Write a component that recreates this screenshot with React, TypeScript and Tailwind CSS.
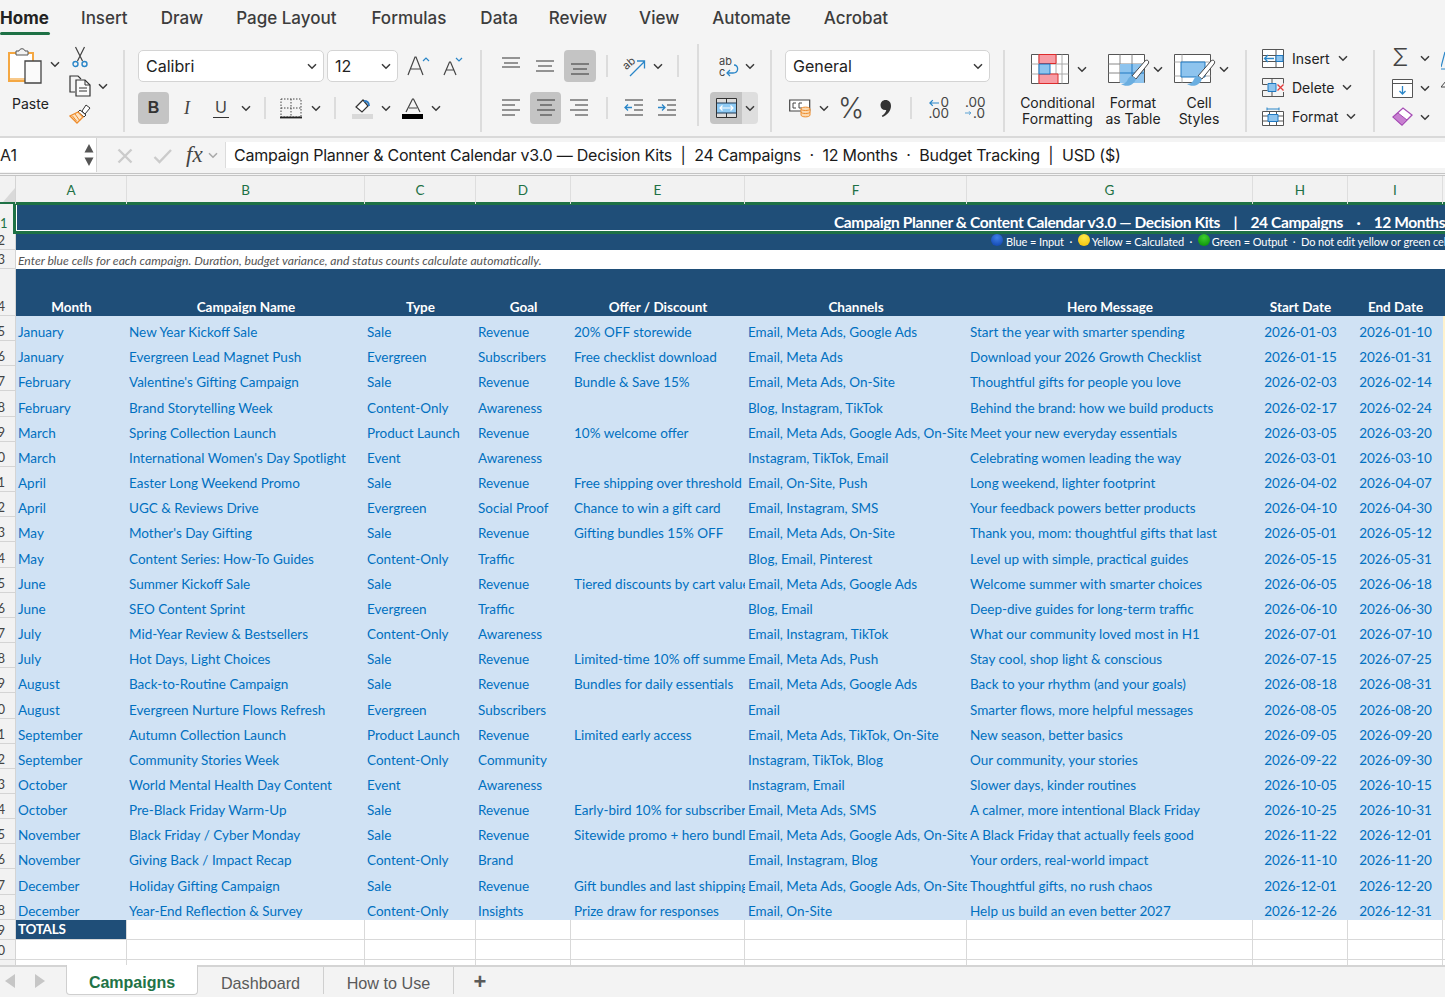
import React from "react";

const rows: string[][] = [
["January","New Year Kickoff Sale","Sale","Revenue","20% OFF storewide","Email, Meta Ads, Google Ads","Start the year with smarter spending","2026-01-03","2026-01-10"],
["January","Evergreen Lead Magnet Push","Evergreen","Subscribers","Free checklist download","Email, Meta Ads","Download your 2026 Growth Checklist","2026-01-15","2026-01-31"],
["February","Valentine's Gifting Campaign","Sale","Revenue","Bundle & Save 15%","Email, Meta Ads, On-Site","Thoughtful gifts for people you love","2026-02-03","2026-02-14"],
["February","Brand Storytelling Week","Content-Only","Awareness","","Blog, Instagram, TikTok","Behind the brand: how we build products","2026-02-17","2026-02-24"],
["March","Spring Collection Launch","Product Launch","Revenue","10% welcome offer","Email, Meta Ads, Google Ads, On-Site","Meet your new everyday essentials","2026-03-05","2026-03-20"],
["March","International Women's Day Spotlight","Event","Awareness","","Instagram, TikTok, Email","Celebrating women leading the way","2026-03-01","2026-03-10"],
["April","Easter Long Weekend Promo","Sale","Revenue","Free shipping over threshold","Email, On-Site, Push","Long weekend, lighter footprint","2026-04-02","2026-04-07"],
["April","UGC & Reviews Drive","Evergreen","Social Proof","Chance to win a gift card","Email, Instagram, SMS","Your feedback powers better products","2026-04-10","2026-04-30"],
["May","Mother's Day Gifting","Sale","Revenue","Gifting bundles 15% OFF","Email, Meta Ads, On-Site","Thank you, mom: thoughtful gifts that last","2026-05-01","2026-05-12"],
["May","Content Series: How-To Guides","Content-Only","Traffic","","Blog, Email, Pinterest","Level up with simple, practical guides","2026-05-15","2026-05-31"],
["June","Summer Kickoff Sale","Sale","Revenue","Tiered discounts by cart value","Email, Meta Ads, Google Ads","Welcome summer with smarter choices","2026-06-05","2026-06-18"],
["June","SEO Content Sprint","Evergreen","Traffic","","Blog, Email","Deep-dive guides for long-term traffic","2026-06-10","2026-06-30"],
["July","Mid-Year Review & Bestsellers","Content-Only","Awareness","","Email, Instagram, TikTok","What our community loved most in H1","2026-07-01","2026-07-10"],
["July","Hot Days, Light Choices","Sale","Revenue","Limited-time 10% off summer edit","Email, Meta Ads, Push","Stay cool, shop light & conscious","2026-07-15","2026-07-25"],
["August","Back-to-Routine Campaign","Sale","Revenue","Bundles for daily essentials","Email, Meta Ads, Google Ads","Back to your rhythm (and your goals)","2026-08-18","2026-08-31"],
["August","Evergreen Nurture Flows Refresh","Evergreen","Subscribers","","Email","Smarter flows, more helpful messages","2026-08-05","2026-08-20"],
["September","Autumn Collection Launch","Product Launch","Revenue","Limited early access","Email, Meta Ads, TikTok, On-Site","New season, better basics","2026-09-05","2026-09-20"],
["September","Community Stories Week","Content-Only","Community","","Instagram, TikTok, Blog","Our community, your stories","2026-09-22","2026-09-30"],
["October","World Mental Health Day Content","Event","Awareness","","Instagram, Email","Slower days, kinder routines","2026-10-05","2026-10-15"],
["October","Pre-Black Friday Warm-Up","Sale","Revenue","Early-bird 10% for subscribers","Email, Meta Ads, SMS","A calmer, more intentional Black Friday","2026-10-25","2026-10-31"],
["November","Black Friday / Cyber Monday","Sale","Revenue","Sitewide promo + hero bundles","Email, Meta Ads, Google Ads, On-Site","A Black Friday that actually feels good","2026-11-22","2026-12-01"],
["November","Giving Back / Impact Recap","Content-Only","Brand","","Email, Instagram, Blog","Your orders, real-world impact","2026-11-10","2026-11-20"],
["December","Holiday Gifting Campaign","Sale","Revenue","Gift bundles and last shipping dates","Email, Meta Ads, Google Ads, On-Site","Thoughtful gifts, no rush chaos","2026-12-01","2026-12-20"],
["December","Year-End Reflection & Survey","Content-Only","Insights","Prize draw for responses","Email, On-Site","Help us build an even better 2027","2026-12-26","2026-12-31"],
];

const cols = "grid grid-cols-[16px_111px_238px_111px_95px_174px_222px_286px_95px_95px_200px]";

const Chev = ({ c = "" }: { c?: string }) => (
  <svg width="10" height="7" viewBox="0 0 10 7" className={"shrink-0 " + c}><path d="M1 1.200 5 5.200 9 1.200" fill="none" stroke="#3a3a3a" strokeWidth="1.500" /></svg>
);
const Sep = ({ c = "" }: { c?: string }) => <div className={"w-[2px] shrink-0 bg-[#dcdcdc] " + c} />;

const Lines = ({ ws }: { ws: number[][] }) => (
  <svg width="20" height="20" viewBox="0 0 20 20" className="block">
    {ws.map(([x1, x2, y], i) => <path key={i} d={`M${x1} ${y}H${x2}`} stroke="#333" strokeWidth="1" fill="none" />)}
  </svg>
);

function Paste() {
  return (
    <svg width="38" height="42" viewBox="0 0 38 42" className="shrink-0">
      <path d="M2 8h24v28H2z" fill="#fff" stroke="#f4a742" strokeWidth="2" />
      <path d="M3 34h22" stroke="#f8c98a" strokeWidth="2" />
      <path d="M9 10V6h3c.5-3 5.500-3 6 0h3v4z" fill="#f3f3f3" stroke="#555" strokeWidth="1" />
      <path d="M18 16h16v22H18z" fill="#fafafa" stroke="#444" strokeWidth="1.300" />
    </svg>
  );
}
function Cut() {
  return (
    <svg width="16" height="22" viewBox="0 0 16 22" className="shrink-0">
      <path d="M3.500 1 10.500 15M12.500 1 5.500 15" stroke="#444" strokeWidth="1.200" fill="none" />
      <circle cx="3.500" cy="18" r="2.500" fill="none" stroke="#2a86c8" strokeWidth="1.400" />
      <circle cx="12.500" cy="18" r="2.500" fill="none" stroke="#2a86c8" strokeWidth="1.400" />
    </svg>
  );
}
function CopyI() {
  return (
    <svg width="22" height="22" viewBox="0 0 22 22" className="shrink-0">
      <path d="M6 17H1V1h8l3 3" fill="none" stroke="#333" strokeWidth="1.200" />
      <path d="M7 5h9l5 5v11H7z" fill="#fafafa" stroke="#333" strokeWidth="1.200" />
      <path d="M16 5v5h5M10 13h8M10 16h8" fill="none" stroke="#333" />
    </svg>
  );
}
function Painter() {
  return (
    <svg width="22" height="20" viewBox="0 0 22 20" className="shrink-0">
      <path d="M17 1l4 3-5 6-3-3z" fill="#fff" stroke="#333" />
      <path d="M11 6l6 5-2 2-6-5z" fill="#fff" stroke="#333" />
      <path d="M9 8 1 12l7 7 6-6z" fill="#fde3c3" stroke="#ee8c2c" strokeWidth="1.300" />
      <path d="M6 10l5 7M3.500 12l4 5" stroke="#ee8c2c" fill="none" />
    </svg>
  );
}
function BigA({ big }: { big?: boolean }) {
  return (
    <svg width="24" height="22" viewBox="0 0 24 22" className="shrink-0">
      {big ? <>
        <path d="M1 20 8 2h1l7 18M4 14h10" fill="none" stroke="#444" strokeWidth="1.200" />
        <path d="M16 6l3-3 3 3" fill="none" stroke="#2a86c8" strokeWidth="1.200" />
      </> : <>
        <path d="M1 20 6.500 7h1L13 20M3 15h8" fill="none" stroke="#444" strokeWidth="1.200" />
        <path d="M13 3l3 3 3-3" fill="none" stroke="#2a86c8" strokeWidth="1.200" />
      </>}
    </svg>
  );
}
function Borders() {
  return (
    <svg width="22" height="21" viewBox="0 0 22 21" className="shrink-0">
      <path d="M1 1h20v18H1zM11 1v18M1 10h20" fill="none" stroke="#444" strokeDasharray="1.500 1.500" />
      <path d="M0 19.500h22" stroke="#222" strokeWidth="1.800" />
    </svg>
  );
}
function FillI() {
  return (
    <svg width="22" height="22" viewBox="0 0 22 22" className="shrink-0">
      <path d="M4 10l7-7 5 6-6 6z" fill="#fff" stroke="#333" strokeWidth="1.200" />
      <path d="M12 4c3 0 5 2 5 5" fill="none" stroke="#2a78c0" strokeWidth="1.800" />
      <path d="M0 17h21v5H0z" fill="#d9d9d9" />
    </svg>
  );
}
function FontA() {
  return (
    <svg width="22" height="21" viewBox="0 0 22 21" className="shrink-0">
      <path d="M4 14 10.500 1h1L18 14M7 10h8" fill="none" stroke="#444" strokeWidth="1.200" />
      <path d="M0 16h21v5H0z" fill="#000" />
    </svg>
  );
}
function Orient() {
  return (
    <svg width="24" height="24" viewBox="0 0 24 24" className="shrink-0">
      <text x="0" y="13" fontSize="11" fill="#444" fontFamily="Inter" transform="rotate(-40 6 10)">ab</text>
      <path d="M7 22 21 8M14 7h7.500v7.500" fill="none" stroke="#2a86c8" strokeWidth="1.300" />
    </svg>
  );
}
function WrapI() {
  return (
    <svg width="22" height="22" viewBox="0 0 22 22" className="shrink-0">
      <text x="1" y="10" fontSize="11" fill="#444" fontFamily="Inter">ab</text>
      <text x="1" y="21" fontSize="11" fill="#444" fontFamily="Inter">c</text>
      <path d="M9 18h6c6 0 6-8 1-8" fill="none" stroke="#2a86c8" strokeWidth="1.300" />
      <path d="M12 15l-3 3 3 3" fill="none" stroke="#2a86c8" strokeWidth="1.300" />
    </svg>
  );
}
function Merge() {
  return (
    <svg width="21" height="20" viewBox="0 0 21 20" className="shrink-0">
      <path d="M.5.500h20v19H.500z" fill="#dcdcdc" stroke="#333" />
      <path d="M10.500 .5v5M10.500 14.500v5" stroke="#333" fill="none" />
      <path d="M1 5h19v10H1z" fill="#8fcbf5" />
      <path d="M.5 5h20M.5 15h20" stroke="#1f3a57" strokeWidth="1.200" fill="none" />
      <path d="M4 10h13M6.500 7.500 4 10l2.500 2.500M14.500 7.500 17 10l-2.500 2.500" stroke="#fff" strokeWidth="1.200" fill="none" />
    </svg>
  );
}
function Currency() {
  return (
    <svg width="22" height="20" viewBox="0 0 22 20" className="shrink-0">
      <path d="M.7 2h20v11H.700z" fill="#fff" stroke="#444" strokeWidth="1.200" />
      <path d="M4 5h3M4 10h3M4 5v5M10 5h3M10 10h3M10 5v5" stroke="#444" fill="none" />
      <path d="M12 11c0-2.500 9-2.500 9 0v6c0 2.500-9 2.500-9 0z" fill="#fbd9b0" stroke="#ee8c2c" />
      <path d="M12 11c0 2 9 2 9 0M12 14c0 2 9 2 9 0" fill="none" stroke="#ee8c2c" />
    </svg>
  );
}
function Dec({ inc }: { inc?: boolean }) {
  return inc ? (
    <div className="w-[20px] h-[22px] shrink-0 text-[13.500px] leading-[10.500px] text-[#444] font-['Inter']">
      <div className="text-right">.00</div>
      <div className="flex items-center justify-end gap-[1px] h-[11px]"><svg width="12" height="10" viewBox="0 0 12 10"><path d="M0 5h10M7 2l3 3-3 3" fill="none" stroke="#2a86c8" strokeWidth="1.300" /></svg><span>.0</span></div>
    </div>
  ) : (
    <div className="w-[21px] h-[22px] shrink-0 text-[13.500px] leading-[10.500px] text-[#444] font-['Inter']">
      <div className="flex items-center justify-end gap-[1px] h-[11px]"><svg width="12" height="10" viewBox="0 0 12 10"><path d="M12 5H2M5 2 2 5l3 3" fill="none" stroke="#2a86c8" strokeWidth="1.300" /></svg><span>0</span></div>
      <div className="text-right">.00</div>
    </div>
  );
}
function Cf() {
  return (
    <svg width="38" height="30" viewBox="0 0 38 30" className="shrink-0">
      <path d="M.5.500h37v29H.500z" fill="#fff" stroke="#555" />
      <path d="M.5 10h37M.5 20h37M8 .5v29M25 .5v29M31 .5v29" stroke="#aaa" fill="none" />
      <path d="M8 .5h17v9H8z" fill="#f79ca4" stroke="#dd2b2b" />
      <path d="M8 20h19v9.500H8z" fill="#f79ca4" stroke="#dd2b2b" />
      <path d="M8 10h11v10H8z" fill="#8ec4ee" stroke="#1f78c1" />
    </svg>
  );
}
function Brush({ fancy }: { fancy?: boolean }) {
  return (
    <svg width="42" height="36" viewBox="0 0 42 36" className="shrink-0 mt-[6px]">
      <path d="M.5.500h36v28H.500z" fill="#fff" stroke="#555" />
      {fancy ? <>
        <path d="M.5 8h36M8 .5v28M.5 22h36" stroke="#aaa" fill="none" />
        <path d="M7 8h24v15H7z" fill="#8ec4ee" stroke="#1f78c1" />
      </> : <>
        <path d="M.5 10h36M.5 19h36M12 .5v28M24 .5v28" stroke="#888" fill="none" />
        <path d="M12 10h24v19H12z" fill="#8ec4ee" />
        <path d="M24 10v19M12 19h24" stroke="#1f78c1" fill="none" />
      </>}
      <path d="M24 22 37 7c2-2 5 0 3 3L28 25z" fill="#fff" stroke="#444" />
      <path d="M24 22c-2 0-4 2-5 5-1 2-4 3-6 3 4 3 12 3 15-5z" fill="#6aaee0" />
    </svg>
  );
}
function CellI({ kind }: { kind: "ins" | "del" | "fmt" }) {
  return (
    <svg width="23" height="19" viewBox="0 0 23 19" className="shrink-0">
      {kind === "ins" && <>
        <path d="M.5.500h21v18H.500zM.5 6.500h21M.5 12.500h21M14 .5v18" fill="#fff" stroke="#555" />
        <path d="M14 6.500h7v6h-7z" fill="#8ec4ee" stroke="#1f78c1" />
        <path d="M12 9.500H3M6 6 2.500 9.500 6 13" fill="none" stroke="#2a86c8" strokeWidth="1.300" />
      </>}
      {kind === "del" && <>
        <path d="M.5.500h21M.5 18.500h21M.5 6.500h5M.5 12.500h5M.5.500v6M.5 12.500v6M21.500.5v5M21.500 14v5M10 .5v5M10 13v5" fill="none" stroke="#555" />
        <path d="M6 5.500h8v8H6z" fill="#8ec4ee" stroke="#1f78c1" />
        <path d="M15.500 6.500l6 6M21.500 6.500l-6 6" stroke="#e23b3b" strokeWidth="1.300" />
      </>}
      {kind === "fmt" && <>
        <path d="M.5 4.500h21v14H.500zM7.500 4.500v14M14.500 4.500v14M.5 9h21M.5 14h21" fill="#fff" stroke="#555" />
        <path d="M6 7.500h10v7H6z" fill="#8ec4ee" stroke="#1f78c1" />
        <path d="M5 2h12M5 .5v3M17 .5v3" fill="none" stroke="#2a86c8" />
      </>}
    </svg>
  );
}

const Ball = ({ c }: { c: string }) => <span className={"inline-block w-[12px] h-[12px] mt-[-5px] rounded-full shrink-0 " + c} />;

function Ribbon() {
  return (
    <div className="h-[138px] bg-[#f4f4f4] border-b-[2px] border-[#d9d9d9] font-['Inter',sans-serif] text-[#222] overflow-hidden shrink-0">
      <div className="h-[36px] flex items-start pt-[8px] gap-[33px] text-[17px] leading-[21px] text-[#3c3c3c] font-medium">
        <div className="relative w-[48px] font-bold text-[#222] h-[27px]">Home<div className="absolute left-0 bottom-0 h-[3px] w-[50px] rounded-full bg-[#1e7145]" /></div>
        <div>Insert</div><div>Draw</div><div>Page Layout</div><div className="ml-[2px]">Formulas</div><div className="ml-[1px]">Data</div><div className="ml-[-2px]">Review</div><div className="ml-[-1px]">View</div><div>Automate</div><div>Acrobat</div>
      </div>
      <div className="h-[100px] flex items-start">
        {/* clipboard */}
        <div className="w-[123px] h-[96px] shrink-0 flex pt-[11px] pl-[7px]">
          <div className="w-[58px] shrink-0">
            <div className="flex items-center gap-[5px] mt-[-2px]"><Paste /><Chev c="mt-[-4px]" /></div>
            <div className="text-[14px] leading-[18px] mt-[8px] ml-[5px]">Paste</div>
          </div>
          <div className="flex flex-col">
            <div className="ml-[7px] mt-[-1px]"><Cut /></div>
            <div className="flex items-center ml-[4px] mt-[7px] gap-[7px]"><CopyI /><Chev /></div>
            <div className="ml-[4px] mt-[7px]"><Painter /></div>
          </div>
        </div>
        <Sep c="h-[82px] mt-[14px]" />
        {/* font */}
        <div className="w-[355px] shrink-0 pt-[14px] pl-[13px]">
          <div className="flex items-center h-[32px]">
            <div className="w-[186px] h-[32px] bg-white border border-[#d4d4d4] rounded-[5px] flex items-center justify-between pl-[7px] pr-[6px] text-[16px]">Calibri<Chev /></div>
            <div className="w-[71px] h-[32px] ml-[3px] bg-white border border-[#d4d4d4] rounded-[5px] flex items-center justify-between pl-[7px] pr-[6px] text-[16px]">12<Chev /></div>
            <div className="ml-[9px]"><BigA big /></div>
            <div className="ml-[12px]"><BigA /></div>
          </div>
          <div className="flex items-center h-[32px] mt-[10px]">
            <div className="w-[31px] h-[32px] rounded-[4px] bg-[#c4c4c4] flex items-center justify-center font-['Liberation_Sans'] font-bold text-[16px] text-[#333]">B</div>
            <div className="w-[18px] ml-[9px] text-center font-['Liberation_Serif'] italic text-[18px] text-[#444]">I</div>
            <div className="w-[16px] ml-[17px] text-center font-['Inter'] text-[16px] leading-[19px] text-[#444] border-b border-[#333]">U</div>
            <Chev c="ml-[12px]" />
            <Sep c="h-[22px] ml-[13px] mr-[14px]" />
            <Borders />
            <Chev c="ml-[9px]" />
            <Sep c="h-[22px] ml-[13px] mr-[16px]" />
            <FillI />
            <Chev c="ml-[7px]" />
            <div className="ml-[11px]"><FontA /></div>
            <Chev c="ml-[7px]" />
          </div>
        </div>
        <Sep c="h-[82px] mt-[14px]" />
        {/* align */}
        <div className="w-[215px] shrink-0 pt-[14px] pl-[19px]">
          <div className="flex items-center h-[32px]">
            <div className="w-[21px]"><Lines ws={[[1,19,2],[3,17,7],[1,19,11]]} /></div>
            <div className="w-[21px] ml-[13px]"><Lines ws={[[1,19,5],[3,17,10],[1,19,15]]} /></div>
            <div className="w-[32px] h-[32px] ml-[8px] rounded-[4px] bg-[#c4c4c4] flex items-center justify-center"><Lines ws={[[1,19,8],[3,17,13],[1,19,18]]} /></div>
            <Sep c="h-[22px] ml-[10px] mr-[15px]" />
            <Orient />
            <Chev c="ml-[6px]" />
            <Sep c="h-[22px] ml-[14px]" />
          </div>
          <div className="flex items-center h-[32px] mt-[10px]">
            <div className="w-[21px]"><Lines ws={[[1,19,2],[1,14,7],[1,19,12],[1,14,17]]} /></div>
            <div className="w-[31px] h-[32px] ml-[8px] rounded-[4px] bg-[#c4c4c4] flex items-center justify-center"><Lines ws={[[1,19,2],[4,16,7],[1,19,12],[4,16,17]]} /></div>
            <div className="w-[21px] ml-[8px]"><Lines ws={[[1,19,2],[6,19,7],[1,19,12],[6,19,17]]} /></div>
            <Sep c="h-[22px] ml-[16px] mr-[16px]" />
            <svg width="20" height="20" viewBox="0 0 20 20" className="shrink-0"><path d="M1 2h18M10 7h9M10 12h9M1 17h18" stroke="#333" /><path d="M8 9.500H1M4 6.500 1 9.500l3 3" fill="none" stroke="#2a86c8" strokeWidth="1.300" /></svg>
            <svg width="20" height="20" viewBox="0 0 20 20" className="shrink-0 ml-[13px]"><path d="M1 2h18M10 7h9M10 12h9M1 17h18" stroke="#333" /><path d="M1 9.500h7M5 6.500l3 3-3 3" fill="none" stroke="#2a86c8" strokeWidth="1.300" /></svg>
          </div>
        </div>
        <Sep c="h-[82px] mt-[8px]" />
        {/* wrap/merge */}
        <div className="w-[71px] shrink-0 pt-[14px] pl-[11px]">
          <div className="flex items-center h-[32px] pl-[8px] gap-[5px]"><WrapI /><Chev /></div>
          <div className="flex items-center h-[32px] mt-[10px]">
            <div className="w-[32px] h-[32px] rounded-l-[4px] bg-[#c4c4c4] flex items-center justify-center"><Merge /></div>
            <div className="w-[16px] h-[32px] rounded-r-[4px] bg-[#dedede] flex items-center justify-center"><Chev /></div>
          </div>
        </div>
        <Sep c="h-[82px] mt-[14px]" />
        {/* number */}
        <div className="w-[231px] shrink-0 pt-[14px] pl-[13px]">
          <div className="w-[205px] h-[32px] bg-white border border-[#d4d4d4] rounded-[5px] flex items-center justify-between pl-[7px] pr-[6px] text-[16px]">General<Chev /></div>
          <div className="flex items-center h-[32px] mt-[10px] pl-[4px]">
            <Currency />
            <Chev c="ml-[8px]" />
            <div className="w-[24px] ml-[9px] text-[28px] font-light leading-[28px] text-center text-[#444]">%</div>
            <svg width="11" height="17" viewBox="0 0 11 17" className="ml-[18px] shrink-0"><path d="M5.500 0C9 0 11 2.500 11 6c0 5-4 9-8.500 11l-.7-1.200C4.500 14 6 12 6.300 10 3 10.500 .5 8.500.5 5.300.5 2.200 2.700 0 5.500 0z" fill="#333" /></svg>
            <Sep c="h-[22px] ml-[19px] mr-[16px]" />
            <Dec />
            <div className="ml-[16px]"><Dec inc /></div>
          </div>
        </div>
        <Sep c="h-[82px] mt-[14px]" />
        {/* styles */}
        <div className="w-[240px] shrink-0 flex pt-[15px] text-[14px] leading-[16px] text-center">
          <div className="w-[103px] shrink-0">
            <div className="flex items-center pl-[26px] gap-[8px] h-[36px]"><Cf /><Chev /></div>
            <div className="mt-[8px] ml-[2px]">Conditional<br />Formatting</div>
          </div>
          <div className="w-[66px] shrink-0">
            <div className="flex items-center h-[36px]"><Brush /><Chev c="ml-[3px]" /></div>
            <div className="mt-[8px] w-[76px] ml-[-13px]">Format<br />as Table</div>
          </div>
          <div className="w-[66px] shrink-0">
            <div className="flex items-center h-[36px]"><Brush fancy /><Chev c="ml-[3px]" /></div>
            <div className="mt-[8px] w-[50px] ml-[0px]">Cell<br />Styles</div>
          </div>
        </div>
        <Sep c="h-[82px] mt-[14px]" />
        {/* cells */}
        <div className="w-[126px] shrink-0 pt-[13px] pl-[15px] text-[14px] leading-[18px]">
          <div className="flex items-center h-[19px]"><CellI kind="ins" /><span className="ml-[7px]">Insert</span><Chev c="ml-[8px]" /></div>
          <div className="flex items-center h-[19px] mt-[10px]"><CellI kind="del" /><span className="ml-[7px]">Delete</span><Chev c="ml-[8px]" /></div>
          <div className="flex items-center h-[19px] mt-[10px]"><CellI kind="fmt" /><span className="ml-[7px]">Format</span><Chev c="ml-[8px]" /></div>
        </div>
        <Sep c="h-[82px] mt-[14px]" />
        {/* editing */}
        <div className="flex-1 min-w-0 pt-[12px] pl-[17px] flex">
          <div className="w-[49px] shrink-0">
            <div className="flex items-center h-[20px]"><div className="text-[24px] leading-[20px] font-light text-[#444] w-[20px]">Σ</div><Chev c="ml-[8px]" /></div>
            <div className="flex items-center h-[20px] mt-[10px]">
              <svg width="21" height="19" viewBox="0 0 21 19" className="shrink-0"><path d="M.5.500h20v18H.500z" fill="#fff" stroke="#555" /><path d="M.5 4.500h20" stroke="#555" /><path d="M10.500 7v8M7.500 12l3 3 3-3" fill="none" stroke="#2a86c8" strokeWidth="1.300" /></svg>
              <Chev c="ml-[7px]" />
            </div>
            <div className="flex items-center h-[20px] mt-[9px]">
              <svg width="21" height="20" viewBox="0 0 21 20" className="shrink-0"><path d="M1 10 11 1l9 7-10 10z" fill="#fff" stroke="#a64db5" strokeWidth="1.300" /><path d="M1 10l5-4 9 7-5 5z" fill="#c77fd0" stroke="#a64db5" /></svg>
              <Chev c="ml-[7px]" />
            </div>
          </div>
          <svg width="6" height="40" viewBox="0 0 6 40" className="shrink-0 mt-[3px]"><path d="M0 16 4 1M0 18h6" fill="none" stroke="#2a86c8" strokeWidth="1.200" /><path d="M5 30 0 36h5z" fill="none" stroke="#444" /></svg>
        </div>
      </div>
    </div>
  );
}

function FormulaBar() {
  return (
    <div className="h-[38px] flex bg-[#f4f4f4] border-b-[3px] border-double border-[#c4c4c4] shrink-0 font-['Inter',sans-serif]">
      <div className="w-[97px] h-[34px] bg-white border-r border-[#d4d4d4] flex items-center justify-between pr-[1px] text-[16px] text-[#222]">
        A1
        <svg width="12" height="26" viewBox="0 0 12 26"><path d="M1.500 10.500 6 2l4.500 8.500zM1.500 15.500 6 24l4.500-8.500z" fill="#555" /></svg>
      </div>
      <div className="w-[128px] flex items-center shrink-0">
        <svg width="16" height="16" viewBox="0 0 16 16" className="ml-[20px]"><path d="M1.500 1.500l13 13M14.500 1.500l-13 13" stroke="#cbcbcb" strokeWidth="2.400" /></svg>
        <svg width="20" height="16" viewBox="0 0 20 16" className="ml-[20px]"><path d="M1.500 9l5 5L18 2" fill="none" stroke="#cbcbcb" strokeWidth="2.400" /></svg>
        <span className="ml-[13px] font-['Liberation_Serif'] italic text-[23px] text-[#444]">fx</span>
        <Chev c="ml-[5px] opacity-40" />
      </div>
      <div className="flex-1 h-[26px] mt-[4px] bg-white border-l border-[#dcdcdc] pl-[8px] text-[16px] tracking-[-0.23px] leading-[26px] text-[#1a1a1a] whitespace-pre overflow-hidden">
        Campaign Planner &amp; Content Calendar v3.0 — Decision Kits  |  24 Campaigns  ·  12 Months  ·  Budget Tracking  |  USD ($)
      </div>
    </div>
  );
}

const RowH = ({ n, c = "" }: { n: number | string; c?: string }) => (
  <div className={"bg-[#f2f2f2] border-r border-b border-[#d4d4d4] text-[13px] text-[#444] text-right pr-[10px] flex items-end justify-end overflow-hidden whitespace-nowrap leading-[18px] " + c}>{n}</div>
);

function Sheet() {
  const letters = ["A", "B", "C", "D", "E", "F", "G", "H", "I", "J"];
  return (
    <div className="flex-1 min-h-0 overflow-hidden bg-white font-['Lato',sans-serif] text-[13.500px]">
      <div className={cols + " h-[28px] bg-[#f2f2f2] border-b-[2px] border-[#1e7145]"}>
        <div className="border-r border-[#d4d4d4] flex items-end justify-end"><svg width="12" height="16" viewBox="0 0 12 16"><path d="M12 0v14H0z" fill="#d9d9d9" /></svg></div>
        {letters.map((l) => <div key={l} className="border-r border-[#dedede] text-center text-[13.500px] leading-[28px] text-[#1e7145]">{l === "J" ? "" : l}</div>)}
      </div>
      <div className="flex h-[30px]">
        <div className="w-[13px] shrink-0 bg-[#f2f2f2] text-[#1e7145]"><div className="text-[13px] leading-[16px] mt-[11px] mr-[8px] text-right">1</div></div>
        <div className="flex-1 min-w-0 border-l-[3px] border-t-[1px] border-b-[3px] border-[#1e7145] overflow-hidden">
          <div className="h-[26px] bg-[#1f4e78] border-b border-l border-white pl-[817px] text-white font-bold text-[15.500px] tracking-[-0.4px] leading-[34px] whitespace-pre">Campaign Planner &amp; Content Calendar v3.0 — Decision Kits    |    24 Campaigns    ·    12 Months    ·    Budget Tracking    |    USD ($)</div>
        </div>
      </div>
      <div className="flex h-[16px]">
        <RowH n={2} c="w-[16px] shrink-0" />
        <div className="flex-1 min-w-0 bg-[#1f4e78] flex items-center pl-[975px] text-white text-[11px] tracking-[-0.08px] leading-[14px] whitespace-pre overflow-hidden">
          <Ball c="bg-[radial-gradient(circle_at_50%_30%,#3f7fe8,#0b3fa8)]" /><span className="ml-[3px]">Blue = Input  ·  </span>
          <Ball c="bg-[radial-gradient(circle_at_50%_30%,#ffe94d,#f3bf00)]" /><span className="ml-[2px]">Yellow = Calculated  ·  </span>
          <Ball c="bg-[radial-gradient(circle_at_50%_30%,#3fcf2f,#048a04)]" /><span className="ml-[2px]">Green = Output  ·  Do not edit yellow or green cells</span>
        </div>
      </div>
      <div className="flex h-[19px]">
        <RowH n={3} c="w-[16px] shrink-0" />
        <div className="flex-1 pl-[2px] italic text-[12.150px] leading-[21px] text-[#555] whitespace-nowrap">Enter blue cells for each campaign. Duration, budget variance, and status counts calculate automatically.</div>
      </div>
      <div className={cols + " h-[47px]"}>
        <RowH n={4} />
        {["Month","Campaign Name","Type","Goal","Offer / Discount","Channels","Hero Message","Start Date","End Date"].map((h) => (
          <div key={h} className="bg-[#1f4e78] text-white font-bold text-center leading-[18px] flex items-end justify-center">{h}</div>
        ))}
        <div className="bg-[#1f4e78]" />
      </div>
      {rows.map((r, i) => (
        <div key={i} className={cols + " h-[25.170px]"}>
          <RowH n={i + 5} />
          {r.map((t, j) => (
            <div key={j} className={"bg-[#d0e2f4] text-[#0070c0] flex items-end overflow-hidden whitespace-nowrap leading-[18px] " + (j >= 7 ? "justify-center" : j >= 4 ? "pl-[3px]" : "pl-[2px]")}>{t}</div>
          ))}
          <div className="bg-[#fff2cc]" />
        </div>
      ))}
      {[29, 30, 31].map((n) => (
        <div key={n} className={cols + " h-[20px]"}>
          <RowH n={n} />
          {[0,1,2,3,4,5,6,7,8,9].map((j) => (
            <div key={j} className={"border-r border-b border-[#d9d9d9] " + (n === 29 && j === 0 ? "bg-[#1f4e78] text-white font-bold pl-[2px] leading-[19px] tracking-[-0.3px]" : "")}>{n === 29 && j === 0 ? "TOTALS" : ""}</div>
          ))}
        </div>
      ))}
    </div>
  );
}

function Tabs() {
  return (
    <div className="h-[32px] bg-[#f3f3f3] border-t-[2px] border-[#d4d4d4] flex items-start shrink-0 font-['Liberation_Sans',sans-serif] text-[16.200px] text-[#5a5a5a]">
      <div className="w-[66px] flex items-center shrink-0 h-[28px]">
        <svg width="10" height="14" viewBox="0 0 10 14" className="ml-[5px]"><path d="M10 0v14L0 7z" fill="#c6c6c6" /></svg>
        <svg width="10" height="14" viewBox="0 0 10 14" className="ml-[20px]"><path d="M0 0v14l10-7z" fill="#c6c6c6" /></svg>
      </div>
      <div className="w-[132px] h-[30px] mt-[-2px] bg-white rounded-b-[4px] border border-t-0 border-[#cfcfcf] text-center font-bold text-[#217346] text-[16px] leading-[35px] shrink-0">Campaigns</div>
      <div className="w-[126px] h-[27px] text-center leading-[32px] border-r border-[#cfcfcf] shrink-0">Dashboard</div>
      <div className="w-[130px] h-[27px] text-center leading-[32px] border-r border-[#cfcfcf] shrink-0">How to Use</div>
      <div className="w-[52px] text-center leading-[29px] font-bold text-[22px] shrink-0">+</div>
    </div>
  );
}

export default function App() {
  return (
    <div className="w-[1445px] h-[997px] flex flex-col overflow-hidden bg-white">
      <Ribbon />
      <FormulaBar />
      <Sheet />
      <Tabs />
    </div>
  );
}
